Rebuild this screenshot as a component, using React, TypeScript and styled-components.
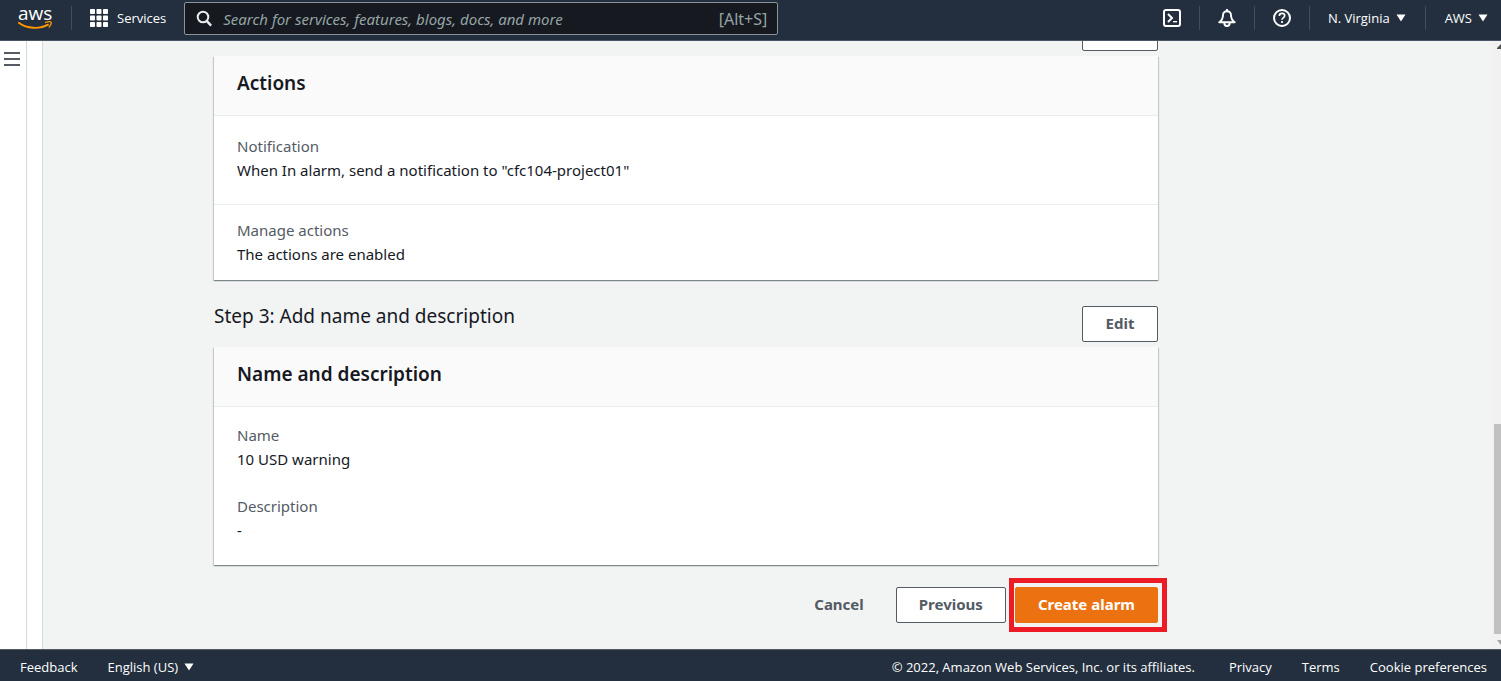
import React from "react";
import styled, { createGlobalStyle, css } from "styled-components";

const GlobalStyle = createGlobalStyle`
  *, *::before, *::after { box-sizing: border-box; }
  body {
    margin: 0;
    font-family: "Noto Sans", "Open Sans", sans-serif;
    font-size: 15px;
    line-height: 24px;
    color: #16191f;
    background: #f2f3f3;
  }
  button, input { font-family: inherit; }
  h2, h3, dl, dt, dd { margin: 0; }
`;

const Page = styled.div`
  display: grid;
  grid-template-rows: auto minmax(0, 1fr) auto;
  height: 100vh;
`;

const TopBar = styled.header`
  display: flex;
  align-items: center;
  height: 41px;
  padding: 0 13px 4px 18px;
  background: #232f3e;
  border-bottom: 1px solid #4c5563;
`;

const Logo = styled.a`
  display: flex;
  flex: none;
  flex-direction: column;
  width: 34px;
  margin-top: -2px;
  color: #fff;
  font: 500 19px/16px "Open Sans", sans-serif;
  text-decoration: none;
  svg { display: block; }
`;

const Divider = styled.span<{ $before: number; $after: number }>`
  flex: none;
  width: 1px;
  height: 24px;
  margin: 0 ${(p) => p.$after}px 0 ${(p) => p.$before}px;
  background: #414d5c;
`;

const barText = css`
  font-family: "Open Sans", "Noto Sans", sans-serif;
  font-size: 13px;
  font-weight: 500;
  line-height: 20px;
  color: #fff;
  white-space: nowrap;
`;

const BarButton = styled.button<{ $gap?: number }>`
  ${barText}
  display: flex;
  flex: none;
  align-items: center;
  gap: ${(p) => p.$gap ?? 6}px;
  padding: 0;
  border: 0;
  background: none;
  svg { display: block; }
`;

const SearchBox = styled.label`
  display: flex;
  flex: 0 1 594px;
  align-items: center;
  gap: 10px;
  height: 33px;
  min-width: 0;
  margin: 1px 0 0 18px;
  padding: 0 10px 0 11px;
  border: 1px solid #879596;
  border-radius: 2px;
  background: #16191f;
  color: #95a5a6;
  font-size: 16px;
  svg { flex: none; }
`;

const SearchInput = styled.input`
  flex: 1;
  min-width: 0;
  padding: 0;
  border: 0;
  outline: 0;
  background: none;
  color: #fff;
  font-size: 15px;
  font-style: italic;
  &::placeholder { color: #95a5a6; opacity: 1; }
`;

const Tools = styled.div`
  display: flex;
  align-items: center;
  margin-left: auto;
`;

const Workspace = styled.div`
  display: flex;
  min-height: 0;
`;

const NavRail = styled.nav`
  flex: none;
  width: 27px;
  padding: 11px 0 0 4px;
  border-right: 1px solid #d5dbdb;
  background: #fff;
`;

const Gutter = styled.div`
  flex: none;
  width: 16px;
  border-right: 1px solid #d5dbdb;
  background: #fff;
`;

const IconButton = styled.button`
  display: block;
  padding: 0;
  border: 0;
  background: none;
  svg { display: block; }
`;

const Main = styled.main`
  display: flex;
  flex: 1;
  flex-direction: column;
  justify-content: flex-end;
  min-width: 0;
  padding: 0 24px 26px 171px;
  overflow: hidden;
`;

const Content = styled.div`
  flex: none;
  width: 100%;
  max-width: 944px;
`;

const StepHeader = styled.div`
  display: flex;
  justify-content: space-between;
  align-items: flex-start;
  margin-bottom: 5px;
`;

const StepTitle = styled.h2`
  font-size: 19px;
  font-weight: 400;
  line-height: 20px;
`;

const Button = styled.button<{ $kind?: "normal" | "link" | "primary" }>`
  height: 36px;
  min-width: 76px;
  padding: 0 22px 2px;
  border: 1px solid #545b64;
  border-radius: 2px;
  background: #fff;
  color: #545b64;
  font-size: 15px;
  font-weight: 700;
  line-height: 20px;
  white-space: nowrap;
  ${(p) => p.$kind === "link" && css`border-color: transparent; background: none;`}
  ${(p) => p.$kind === "primary" && css`border-color: #ec7211; background: #ec7211; color: #fff;`}
`;

const Card = styled.section`
  margin-bottom: 26px;
  background: #fff;
  box-shadow: 0 1px 1px 0 rgba(0, 28, 36, 0.3), 1px 1px 1px 0 rgba(0, 28, 36, 0.15), -1px 1px 1px 0 rgba(0, 28, 36, 0.15);
`;

const CardTitle = styled.h3`
  height: 60px;
  padding: 15px 23px;
  border-bottom: 1px solid #eaeded;
  background: #fafafa;
  font-size: 19px;
  font-weight: 600;
  line-height: 24px;
`;

const Fields = styled.dl<{ $top: number; $bottom: number }>`
  display: grid;
  gap: 23px;
  padding: ${(p) => p.$top}px 23px ${(p) => p.$bottom}px;
  & + & { border-top: 1px solid #eaeded; }
  dt { color: #545b64; }
`;

const FormActions = styled.div`
  display: flex;
  justify-content: flex-end;
  gap: 9px;
  margin-top: -4px;
`;

const Highlighted = styled.span`
  position: relative;
  display: flex;
  &::after {
    content: "";
    position: absolute;
    inset: -9px -9px -9px -6px;
    border: 5px solid #ed1c24;
    pointer-events: none;
  }
`;

const ScrollTrack = styled.div`
  display: flex;
  flex: none;
  flex-direction: column;
  align-items: flex-end;
  justify-content: space-between;
  width: 9px;
  padding: 3px 0 4px;
  background: #f1f1f1;
  overflow: hidden;
  svg { display: block; flex: none; }
`;

const ScrollThumb = styled.div`
  width: 7px;
  height: 35%;
  margin: auto 0 6px;
  background: #c1c1c1;
`;

const Footer = styled.footer`
  display: flex;
  align-items: center;
  gap: 30px;
  height: 32px;
  padding: 3px 14px 0 20px;
  border-top: 1px solid #545b64;
  background: #232f3e;
`;

const FooterText = styled.span`
  ${barText}
  margin: 0 4px 0 auto;
`;

const FooterLink = styled.a`
  ${barText}
  text-decoration: none;
`;

const Caret = () => (
  <svg width="10" height="8" viewBox="0 0 10 8"><path d="M.5 .5h9L5 7.5z" fill="#fff" /></svg>
);

const Field = ({ label, value }: { label: string; value: string }) => (
  <div>
    <dt>{label}</dt>
    <dd>{value}</dd>
  </div>
);

export default function App() {
  return (
    <Page>
      <GlobalStyle />
      <TopBar>
        <Logo href="#">
          aws
          <svg width="34" height="9" viewBox="0 0 34 9" fill="none" stroke="#f90">
            <path d="M.8 1.8C9 8 22 8.2 30 3.6" strokeWidth="1.8" strokeLinecap="round" />
            <path d="M27.5 1.3c3-.8 5.3-.7 5.6 0 .3.8-.6 3.2-2 4.8" strokeWidth="1.3" strokeLinecap="round" />
          </svg>
        </Logo>
        <Divider $before={19} $after={18} />
        <BarButton $gap={9}>
          <svg width="18" height="18" viewBox="0 0 18 18" fill="#fff">
            {[0, 6.5, 13].map((y) => [0, 6.5, 13].map((x) => (
              <rect key={`${x}-${y}`} x={x} y={y} width="5" height="5" rx=".8" />
            )))}
          </svg>
          Services
        </BarButton>
        <SearchBox>
          <svg width="17" height="17" viewBox="0 0 17 17" fill="none" stroke="#eaeded" strokeWidth="2">
            <circle cx="7" cy="7" r="5.3" />
            <path d="M10.7 10.9l4.4 4.7" strokeWidth="2.4" />
          </svg>
          <SearchInput type="search" aria-label="Search" placeholder="Search for services, features, blogs, docs, and more" />
          <span>[Alt+S]</span>
        </SearchBox>
        <Tools>
          <BarButton aria-label="CloudShell">
            <svg width="18" height="18" viewBox="0 0 18 18" fill="none" stroke="#fff" strokeWidth="2">
              <rect x="1" y="1" width="16" height="16" rx="2" />
              <path d="M5 5l4 4-4 4" />
              <path d="M10 12.7h4" strokeWidth="1.4" />
            </svg>
          </BarButton>
          <Divider $before={18} $after={18} />
          <BarButton aria-label="Notifications">
            <svg width="18" height="18" viewBox="0 0 18 18" fill="none" stroke="#fff" strokeWidth="1.9" strokeLinejoin="round">
              <path d="M9 2.300c-2.600 0-4 1.700-4 3.900C5 9 4 11.200 1.300 13.300h15.400C14 11.200 13 9 13 6.200c0-2.200-1.400-3.900-4-3.900z" />
              <path d="M9 0v2.500M6.300 14c0 1.800 1.200 3 2.700 3s2.700-1.200 2.700-3" />
            </svg>
          </BarButton>
          <Divider $before={18} $after={18} />
          <BarButton aria-label="Help">
            <svg width="18" height="18" viewBox="0 0 18 18" fill="none" stroke="#fff" strokeWidth="2">
              <circle cx="9" cy="9" r="8" />
              <path d="M6.300 7c0-1.700 1.100-2.600 2.700-2.600s2.700.9 2.700 2.300c0 1.900-2.700 2-2.700 4.100M9 12v2" strokeWidth="1.700" />
            </svg>
          </BarButton>
          <Divider $before={18} $after={18} />
          <BarButton aria-haspopup="true">N. Virginia <Caret /></BarButton>
          <Divider $before={19} $after={19} />
          <BarButton aria-haspopup="true">AWS <Caret /></BarButton>
        </Tools>
      </TopBar>

      <Workspace>
        <NavRail>
          <IconButton aria-label="Open navigation">
            <svg width="16" height="15" viewBox="0 0 16 15" fill="#545b64">
              <path d="M0 0h16v2H0zM0 6h16v2H0zM0 12h16v2H0z" />
            </svg>
          </IconButton>
        </NavRail>
        <Gutter />
        <Main>
          <Content>
            <StepHeader>
              <span />
              <Button aria-label="Edit actions" />
            </StepHeader>
            <Card>
              <CardTitle>Actions</CardTitle>
              <Fields $top={18} $bottom={22}>
                <Field label="Notification" value={'When In alarm, send a notification to "cfc104-project01"'} />
              </Fields>
              <Fields $top={13} $bottom={14}>
                <Field label="Manage actions" value="The actions are enabled" />
              </Fields>
            </Card>
            <StepHeader>
              <StepTitle>Step 3: Add name and description</StepTitle>
              <Button>Edit</Button>
            </StepHeader>
            <Card>
              <CardTitle>Name and description</CardTitle>
              <Fields $top={16} $bottom={23}>
                <Field label="Name" value="10 USD warning" />
                <Field label="Description" value="-" />
              </Fields>
            </Card>
            <FormActions>
              <Button $kind="link">Cancel</Button>
              <Button>Previous</Button>
              <Highlighted>
                <Button $kind="primary">Create alarm</Button>
              </Highlighted>
            </FormActions>
          </Content>
        </Main>
        <ScrollTrack>
          <svg width="4" height="5" viewBox="0 0 4 5"><path d="M4 0v5H0V4z" fill="#505050" /></svg>
          <ScrollThumb />
          <svg width="4" height="5" viewBox="0 0 4 5"><path d="M0 0h4v5z" fill="#a3a3a3" /></svg>
        </ScrollTrack>
      </Workspace>

      <Footer>
        <FooterLink href="#">Feedback</FooterLink>
        <BarButton aria-haspopup="true">English (US) <Caret /></BarButton>
        <FooterText>© 2022, Amazon Web Services, Inc. or its affiliates.</FooterText>
        <FooterLink href="#">Privacy</FooterLink>
        <FooterLink href="#">Terms</FooterLink>
        <FooterLink href="#">Cookie preferences</FooterLink>
      </Footer>
    </Page>
  );
}
